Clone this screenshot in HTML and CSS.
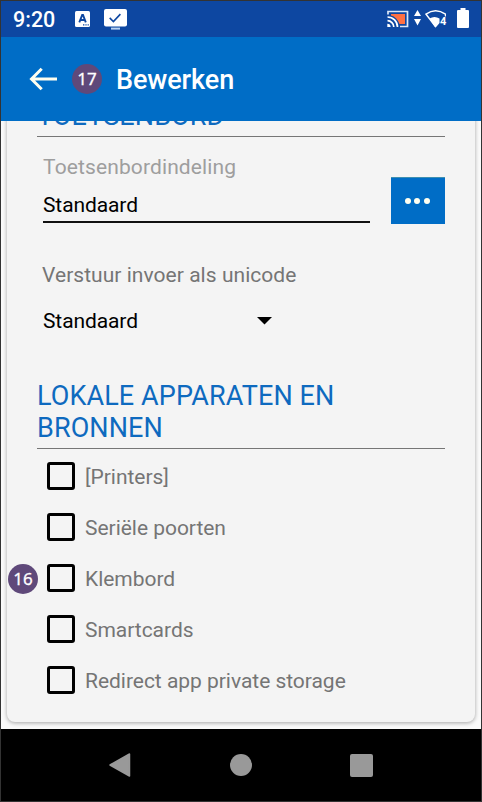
FILE: index.html
```html
<!DOCTYPE html>
<html lang="nl">
<head>
<meta charset="utf-8">
<title>Bewerken</title>
<link rel="stylesheet" href="styles.css">
</head>
<body>
<div class="phone">
  <div class="status">
    <span class="clock">9:20</span>
    <svg class="icon-a" width="15" height="16" viewBox="0 0 15 16"><rect width="15" height="16" rx="1.5" fill="#fff"/><path d="M4.300 11.300 7.200 4h.8l2.800 7.300M5.400 9h4.400" fill="none" stroke="#0d47a1" stroke-width="1.900"/><path d="M8 13.800h1.400M10.400 13.800h1.200M12.600 13.800h1.200" stroke="#0d47a1" stroke-width="1.300"/></svg>
    <svg class="icon-screen" width="23" height="21" viewBox="0 0 23 21"><rect width="23" height="17.500" rx="2" fill="#fff"/><path d="M5.700 8.900l3.700 3.600 7-7.400" fill="none" stroke="#0d47a1" stroke-width="1.600"/><path d="M7 19.600h9" stroke="#b9d3f3" stroke-width="2"/></svg>
    <svg class="icon-cast" width="22" height="18" viewBox="0 0 22 18"><path d="M1 4.500V1.500h19.500v15H13" fill="none" stroke="#dce8f8" stroke-width="1.700"/><path d="M4 4h14v10h-5.500C11 9.500 8 6.500 4 5.500z" fill="#ff7043"/><path d="M.5 7a10 10 0 0 1 10 10M.5 10.700a6.300 6.300 0 0 1 6.300 6.300" fill="none" stroke="#fff" stroke-width="1.700"/><path d="M.3 13.700a3.300 3.300 0 0 1 3.300 3.300H.3z" fill="#fff"/></svg>
    <svg class="icon-net" width="32" height="19" viewBox="0 0 32 19"><path d="M0 7h7L3.500 1zM0 10h7L3.500 16.500z" fill="#fff"/><path d="M31.500 7.500V5.200q-10-7-19.500 0L21.500 17.500" fill="none" stroke="#fff" stroke-width="1.500"/><path d="M15.500 9.500q5-3 10 0V14l-4 4.800z" fill="#fff"/></svg>
    <span class="net-num">4</span>
    <svg class="icon-battery" width="12" height="20" viewBox="0 0 12 20"><path d="M3.500 0h5v2H11q1 0 1 1v16q0 1-1 1H1q-1 0-1-1V3q0-1 1-1h2.500z" fill="#fff"/></svg>
  </div>
  <header class="appbar">
    <svg class="back" width="28" height="24" viewBox="0 0 28 24"><path d="M12.700 1.700 2.500 12l10.200 10.300M2.500 12H28" fill="none" stroke="#fffff0" stroke-width="3"/></svg>
    <span class="badge">17</span>
    <h1>Bewerken</h1>
  </header>
  <main class="content">
    <section class="card">
      <h2>TOETSENBORD</h2>
      <div class="field-row">
        <div class="field">
          <div class="label light">Toetsenbordindeling</div>
          <div class="input">Standaard</div>
        </div>
        <div class="more"><i></i><i></i><i></i></div>
      </div>
      <div class="label unicode">Verstuur invoer als unicode</div>
      <div class="select"><span>Standaard</span><svg width="15" height="8" viewBox="0 0 15 8"><path d="M0 0h15L7.500 7.500z"/></svg></div>
      <h2>LOKALE APPARATEN EN<br>BRONNEN</h2>
      <ul class="options">
        <li><span class="box"></span><span class="text">[Printers]</span></li>
        <li><span class="box"></span><span class="text">Seriële poorten</span></li>
        <li><span class="badge marker">16</span><span class="box"></span><span class="text">Klembord</span></li>
        <li><span class="box"></span><span class="text">Smartcards</span></li>
        <li><span class="box"></span><span class="text">Redirect app private storage</span></li>
      </ul>
    </section>
  </main>
  <nav class="navbar">
    <svg width="22" height="24" viewBox="0 0 22 24"><path d="M1 12 20.500 1v22z" fill="#999" stroke="#999" stroke-width="1.500" stroke-linejoin="round"/></svg>
    <span class="home"></span>
    <span class="recent"></span>
  </nav>
</div>
</body>
</html>
```

FILE: styles.css
```css
* { box-sizing: border-box; }
body { margin: 0; font-family: Roboto, "Liberation Sans", sans-serif; font-size: 21px; }
.phone { width: 482px; height: 802px; border: 1px solid #333; display: flex; flex-direction: column; overflow: hidden; background: #000; }
.status { height: 36px; flex: none; background: #0d47a1; display: flex; align-items: flex-start; color: #fff; }
.clock { width: 62px; margin-left: 12px; line-height: 37px; font-size: 21.5px; font-weight: 500; }
.icon-a { margin-top: 10px; }
.icon-screen { margin: 8px 0 0 14px; }
.icon-cast { margin: 9px 0 0 260px; }
.icon-net { margin: 8px 0 0 5px; }
.net-num { width: 10px; margin: 15px 0 0 -6px; font-size: 11px; line-height: 12px; font-weight: 700; z-index: 1; }
.icon-battery { margin: 7px 0 0 7px; }
.appbar { height: 84px; flex: none; background: #006dc6; color: #fff; display: flex; align-items: center; }
.back { margin-left: 28px; }
.badge { width: 30px; height: 30px; border-radius: 50%; background: #5f497a; color: #fff; font: 17px/29px "Noto Sans", sans-serif; text-align: center; -webkit-text-stroke: .3px #fff; }
.appbar .badge { margin-left: 15px; margin-top: -1px; }
h1 { margin: 2px 0 0 14px; font-size: 27px; font-weight: 500; line-height: 32px; letter-spacing: -.1px; }
.content { height: 608px; flex: none; overflow: hidden; background: #fafafa; padding: 0 6px; }
.card { margin-top: -31px; height: 632px; padding: 10px 30px 17px; border-radius: 8px; background: #f4f4f4; box-shadow: 0 1px 4px rgba(0,0,0,.35); }
h2 { margin: 0; padding-bottom: 4px; border-bottom: 1px solid #767676; color: #0e6abf; font-size: 27px; line-height: 32px; font-weight: 400; letter-spacing: .1px; }
.label { line-height: 26px; color: #757575; }
.light { color: #9e9e9e; letter-spacing: .12px; }
.field-row { display: flex; justify-content: space-between; height: 87px; padding-top: 17px; }
.field { width: 327px; margin-left: 6px; }
.input { margin-top: 12px; height: 31px; line-height: 26px; border-bottom: 2px solid #111; color: #000; letter-spacing: -.1px; }
.more { width: 54px; height: 47px; margin-top: 23px; padding-right: 2px; background: #006dc6; border-top: 1px solid #3e8fb0; display: flex; align-items: center; justify-content: center; gap: 3.5px; }
.more i { width: 6px; height: 6px; border-radius: 50%; background: #fffff0; }
.unicode { margin: 38px 0 0 5px; letter-spacing: .04px; }
.select { margin: 20px 0 46px 6px; display: flex; align-items: center; line-height: 26px; letter-spacing: -.1px; }
.select span { width: 213.5px; }
.select svg { margin-top: -1px; }
.options { list-style: none; margin: 0; padding: 1px 0 0; }
.options li { position: relative; height: 51px; display: flex; align-items: center; color: #757575; }
.box { width: 28px; height: 28px; margin: 0 10px; border: 3px solid #000; border-radius: 3px; }
.text { line-height: 26px; margin-top: 3px; letter-spacing: -.03px; }
.marker { position: absolute; left: -29px; top: 12px; }
.navbar { flex: 1; background: #000; display: flex; align-items: center; padding-left: 108px; }
.home { width: 22px; height: 22px; margin-left: 99px; border-radius: 50%; background: #999; }
.recent { width: 23px; height: 23px; margin-left: 97.500px; border-radius: 2px; background: #999; }
```
